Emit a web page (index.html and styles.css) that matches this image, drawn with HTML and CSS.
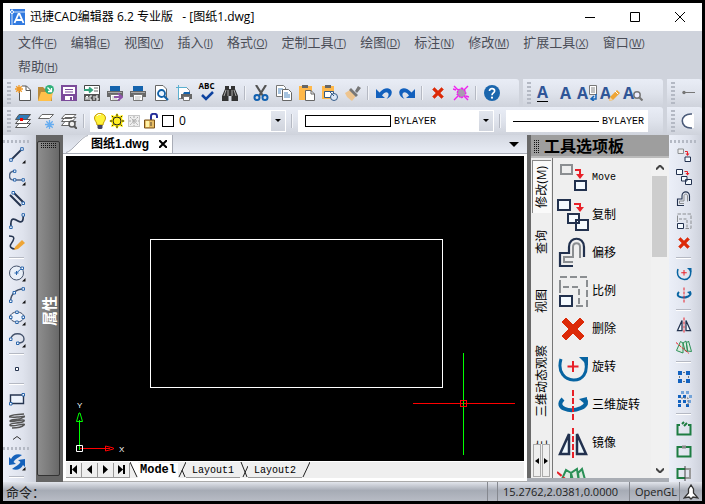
FILE: index.html
```html
<!DOCTYPE html>
<html lang="zh-CN">
<head>
<meta charset="utf-8">
<title>迅捷CAD编辑器</title>
<link rel="stylesheet" href="styles.css">
</head>
<body>
<svg class="sprite" aria-hidden="true">
  <symbol id="new" viewBox="0 0 16 16"><path d="M4.500 3.500V15.500H15.500V5L11.500 1H7" fill="#fff" stroke="#555" /><path d="M11 1v4.500h4.500" fill="none" stroke="#555"/><path d="M4 0v8M0 4h8M1.200 1.200l5.600 5.600M6.800 1.200L1.200 6.800" stroke="#f09a28" stroke-width="1.300"/></symbol>
  <symbol id="open" viewBox="0 0 16 16"><path d="M0 2h5l2 2h7v12H0z" fill="#b98a3c"/><path d="M3 7h12l-2 9H0z" fill="#ffc04a"/><circle cx="11.500" cy="4.500" r="4.500" fill="#2fb07a"/><path d="M9.500 2.500l4 4M13.500 3v3.500H10" stroke="#fff" fill="none" stroke-width="1.300"/></symbol>
  <symbol id="save" viewBox="0 0 16 16"><path d="M1 1h14v14H1z" fill="#fff" stroke="#7b4b9a" stroke-width="2"/><path d="M4 4.500h8M4 7h8" stroke="#7b4b9a"/><path d="M1 9h14v6H1z" fill="#7b4b9a"/><path d="M4 11h8v4H4z" fill="#fff"/><path d="M9 12h2v3H9z" fill="#7b4b9a"/></symbol>
  <symbol id="acis" viewBox="0 0 16 16"><path d="M.5 6V.5h15v15H.5V12" fill="#fff" stroke="#444"/><path d="M0 5h7M5 2.500L8 5 5 7.500" stroke="#33a37c" stroke-width="2" fill="none"/><path d="M10 3h4M10 6h4" stroke="#666"/><path d="M0 9h16v7H0z" fill="#555"/><path d="M2 15v-3l1-1 1 1v3M2 13h2M8 11H6v4h2M10 11v4M14 11h-2v2h2v2h-2" stroke="#fff" fill="none"/></symbol>
  <symbol id="print" viewBox="0 0 16 16"><path d="M3 1h10v5H3z" fill="#1463ad"/><path d="M0 6h16v6H0z" fill="#686868"/><path d="M1 7.500h14" stroke="#aaa"/><path d="M3.500 9.500h9v6h-9z" fill="#fff" stroke="#777"/><path d="M5 12h6M5 14h5" stroke="#bbb"/></symbol>
  <symbol id="print2" viewBox="0 0 16 16"><use href="#print"/><path d="M7 12h7M11 8.500l4 3.500-4 3.500" stroke="#8e55aa" stroke-width="2" fill="none"/></symbol>
  <symbol id="preview" viewBox="0 0 16 16"><path d="M2.500.5H10l3.500 3.500v11.500h-11z" fill="#fff" stroke="#666"/><circle cx="8.500" cy="8.500" r="3.500" fill="#eaf4ff" stroke="#1261a8" stroke-width="1.800"/><path d="M11 11l4 4" stroke="#1261a8" stroke-width="2.200"/></symbol>
  <symbol id="setup" viewBox="0 0 16 16"><path d="M2.500 2.500h8l3 3v8h-11z" fill="#fff" stroke="#888"/><path d="M0 2.500h11M2.500 0v15" stroke="#5bb0d0"/><path d="M7 9h7v-2H8z" fill="#1463ad"/><path d="M5 9h11v5H5z" fill="#666"/><path d="M7.500 11.500h6v4h-6z" fill="#fff" stroke="#777"/></symbol>
  <symbol id="check" viewBox="0 0 16 16"><path d="M3 10l4 4 7-7" stroke="#0e43a0" stroke-width="2.500" fill="none"/></symbol>
  <symbol id="find" viewBox="0 0 16 16"><path d="M3 1h4v3h2V1h4v3l3 7v5H9.500v-5h-3v5H0v-5l3-7z" fill="#333"/><path d="M4 5L2 11M6 5v6M10 5v6M12 5l2 6" stroke="#ddd" stroke-width=".7"/></symbol>
  <symbol id="cut" viewBox="0 0 16 16"><path d="M3 0l7 11M13 0L6 11" stroke="#555" stroke-width="2.200"/><circle cx="4" cy="12.500" r="2.500" fill="none" stroke="#1261b0" stroke-width="2"/><circle cx="12" cy="12.500" r="2.500" fill="none" stroke="#1261b0" stroke-width="2"/></symbol>
  <symbol id="copyc" viewBox="0 0 16 16"><path d="M.5.500h7l2 2v9h-9z" fill="#fff" stroke="#777"/><path d="M2 4h5M2 6h3M2 8h3" stroke="#4a86c0"/><path d="M6.500 4.500h6l3 3v8h-9z" fill="#fff" stroke="#666"/><path d="M8 8h4M8 10h6M8 12h6" stroke="#4a86c0"/></symbol>
  <symbol id="paste" viewBox="0 0 16 16"><path d="M0 1h13v14H0z" fill="#ffb84a"/><path d="M3 0h6v3H3z" fill="#666"/><path d="M6.500 5.500H12l3.500 3.500v6.500h-9z" fill="#fff" stroke="#666"/><path d="M12 5.500V9h3.500" stroke="#666" fill="none"/></symbol>
  <symbol id="pasteb" viewBox="0 0 16 16"><path d="M0 1h12v13H0z" fill="#ffb84a"/><path d="M3 0h6v3H3z" fill="#666"/><path d="M2.500 6.500h9v6h-9z" fill="#fff" stroke="#335a88"/><circle cx="12" cy="12" r="3.500" fill="#dbe6f5" stroke="#335a88"/><path d="M8 7l4 4" stroke="#335a88"/></symbol>
  <symbol id="brush" viewBox="0 0 16 16"><path d="M0 8l5-3 6 6-4 5-5-4z" fill="#eec590"/><path d="M6 3l7 7-2 2-7-7zM10 6l3-5 3 2-4 5z" fill="#777"/></symbol>
  <symbol id="undo" viewBox="0 0 16 16"><path d="M0 4v9h9L6 10.500C9 6 12 7 12.500 9c.3 2-.7 3.500-2 5 4-1.500 6-5 5-8C14 2 8 2 3.500 7.500z" fill="#1260bd"/></symbol>
  <symbol id="redo" viewBox="0 0 16 16"><g transform="matrix(-1 0 0 1 16 0)"><use href="#undo"/></g></symbol>
  <symbol id="del" viewBox="0 0 32 32"><path d="M9 5l7 7 7-7 4 4-7 7 7 7-4 4-7-7-7 7-4-4 7-7-7-7z" fill="#dc2a08" stroke="#dc2a08"/></symbol>
  <symbol id="purge" viewBox="0 0 16 16"><path d="M1 1l14 14M15 1L1 15M0 4l3 1M16 12l-3-1" stroke="#f01ef0" stroke-width="1.400"/><path d="M9 3l4 4-1 4-4 2-4-4 1-4z" fill="#a99ab0" stroke="#f01ef0" stroke-dasharray="2 1" stroke-width="1.400"/></symbol>
  <symbol id="help" viewBox="0 0 16 16"><circle cx="8" cy="8" r="8" fill="#1b66ad"/><path d="M5.500 6c0-3.500 5.300-3 5.100 0C10.500 8 8 8 8 10.300" stroke="#fff" stroke-width="1.700" fill="none"/><circle cx="8" cy="12.700" r="1.100" fill="#fff"/></symbol>
  <symbol id="dim" viewBox="0 0 16 16"><path d="M4 7.500h12" stroke="#777"/><circle cx="5" cy="7.500" r="1.700" fill="#777"/></symbol>
  <symbol id="page" viewBox="0 0 16 16"><path d="M8.500.500h7v9h-7z" fill="#fff" stroke="#777"/><path d="M10 3h4M10 5h4M10 7h4" stroke="#888"/><path d="M15 9v5h-5M13 11l-3 3 3 2" stroke="#1766b8" stroke-width="1.500" fill="none"/></symbol>
  <symbol id="pencil" viewBox="0 0 16 16"><path d="M5 16l1-4 7-7 3 3-7 7z" fill="#eea536"/><path d="M5 16l1-4 3 3z" fill="#eed4a5"/><path d="M11 6l3 3" stroke="#fff"/></symbol>
  <symbol id="loupe" viewBox="0 0 16 16"><circle cx="10" cy="10" r="3.200" fill="#eef" stroke="#777" stroke-width="1.500"/><path d="M12 12l3.500 3.500" stroke="#777" stroke-width="2.200"/></symbol>
  <symbol id="layers" viewBox="0 0 16 16"><path d="M4 10.500h11.500l-4 4H.5z" fill="#fff" stroke="#555"/><path d="M4 6.500h11.500l-4 4H.5z" fill="#fff" stroke="#555"/><path d="M4 1.500h11.500l-4 5H.5z" fill="#317cb8" stroke="#555"/><path d="M5 5h3v3H5z" fill="#e00"/></symbol>
  <symbol id="frz" viewBox="0 0 16 16"><path d="M4 1.500h11.500l-4 4H.5z" fill="#fff" stroke="#666"/><path d="M11.500 7v9M7 11.500h9M8.300 8.300l6.400 6.400M14.700 8.300l-6.400 6.400" stroke="#67adf0" stroke-width="1.300"/></symbol>
  <symbol id="lfind" viewBox="0 0 16 16"><path d="M4 8.500h11l-4 4H.5z" fill="#fff" stroke="#666"/><path d="M4 4.500h11l-4 4H.5zM4 1.500h11l-4 4H.5z" fill="#fff" stroke="#666"/><circle cx="11" cy="11" r="3" fill="#eee" stroke="#555" stroke-width="1.500"/><path d="M13 13l3 3" stroke="#555" stroke-width="2"/></symbol>
  <symbol id="arcd" viewBox="0 0 16 16"><path d="M15 1C1-1 1 17 15 15z" fill="#fff"/><path d="M13 1C0 0 0 16 13 15" fill="none" stroke="#4a5a78" stroke-width="1.500"/></symbol>
  <symbol id="bulb" viewBox="0 0 16 16"><path d="M5 12C5 9 2.500 8 2.500 5c0-6 11-6 11 0 0 3-2.500 4-2.500 7z" fill="#fff33a" stroke="#c59c00"/><path d="M5 3c1-2 3-2 4-1" stroke="#fff" fill="none"/><path d="M5.500 12h5v3l-1 1h-3l-1-1z" fill="#446"/></symbol>
  <symbol id="sun" viewBox="0 0 16 16"><path d="M8 0l2 3 4-1-1 4 3 2-3 2 1 4-4-1-2 3-2-3-4 1 1-4-3-2 3-2-1-4 4 1z" fill="#ffec00"/><path d="M8 1v14M1 8h14M3 3l10 10M13 3L3 13" stroke="#222" stroke-dasharray="2 1"/><circle cx="8" cy="8" r="4" fill="#ffee27" stroke="#222"/></symbol>
  <symbol id="snow" viewBox="0 0 16 16"><path d="M2.500 2.500h11v11h-11z" fill="#eee" stroke="#999" stroke-dasharray="1 1"/><path d="M8 3v10M3 8h10M4 4l8 8M12 4l-8 8" stroke="#aaa" stroke-dasharray="2 1"/></symbol>
  <symbol id="lock" viewBox="0 0 16 16"><path d="M8 7V3c0-3 6-3 6 0v2" fill="none" stroke="#252e98" stroke-width="2"/><path d="M1.500 7h10v8h-10z" fill="#e6bd65" stroke="#795018"/><path d="M3 8h3v6H3z" fill="#fff2a8"/><path d="M8 9v4" stroke="#543"/></symbol>
  <symbol id="fly" viewBox="0 0 16 16"><path d="M12 15.500h3.500V12z" fill="#111"/></symbol>
  <symbol id="line" viewBox="0 0 16 16"><path d="M2 13L13 2" stroke="#263550" stroke-width="1.800"/><path d="M.7 11.700h2.600v2.600H.7zM11.700.700h2.600v2.600h-2.600z" fill="#fff" stroke="#2b67ad"/></symbol>
  <symbol id="pline" viewBox="0 0 16 16"><path d="M5 2C-1 3-1 11 5 11h9" stroke="#526687" fill="none" stroke-width="1.500"/><path d="M4.500 1h2.400v2.400H4.500zM4.500 9.700h2.400v2.400H4.500zM13 9.700h2.400v2.400H13z" fill="#fff" stroke="#2b67ad"/></symbol>
  <symbol id="mline" viewBox="0 0 16 16"><path d="M1 4l11 11M4 1l11 11" stroke="#263550" stroke-width="2"/><path d="M3 .5h2.500V3H3zM13 11h2.500v2.500H13z" fill="#fff" stroke="#2b67ad"/></symbol>
  <symbol id="spline" viewBox="0 0 16 16"><path d="M2 14C1 3 6 6 9 8s6 1 5-6" fill="none" stroke="#263550" stroke-width="1.700"/><path d="M.7 13h2.500v2.500H.7zM13 .7h2.500v2.500H13z" fill="#fff" stroke="#2b67ad"/></symbol>
  <symbol id="sketch" viewBox="0 0 16 16"><path d="M0 1c8 0 4 5 2 8s1 5 4 5" fill="none" stroke="#263550" stroke-width="1.500"/><path d="M5 15l1-3 7-7 3 3-7 6z" fill="#eea536"/></symbol>
  <symbol id="circle" viewBox="0 0 16 16"><circle cx="7.500" cy="8" r="7" fill="#e8eff8" stroke="#44526b"/><path d="M7.500 8L13 3M5.500 8h4M7.500 6v4" stroke="#2b67ad"/><path d="M12 2h2.500v2.500H12z" fill="#fff" stroke="#2b67ad"/></symbol>
  <symbol id="arc" viewBox="0 0 16 16"><path d="M1.500 14C2 7 7 2 14 2" fill="none" stroke="#44526b" stroke-width="1.400"/><path d="M.5 13H3v2.500H.5zM4 4.500h2.500V7H4zM13 .7h2.500v2.500H13z" fill="#fff" stroke="#2b67ad"/></symbol>
  <symbol id="ell" viewBox="0 0 16 16"><ellipse cx="8" cy="8" rx="7" ry="5" fill="#edf3fc" stroke="#44526b"/><path d="M.5 7H3v2.500H.5zM13 7h2.500v2.500H13zM6.700 2h2.500v2.500H6.700zM6.700 12h2.500v2.500H6.700z" fill="#fff" stroke="#2b67ad"/></symbol>
  <symbol id="ellarc" viewBox="0 0 16 16"><path d="M2 8c0-7 13-7 13 0 0 3-3 4-6 4" fill="none" stroke="#44526b" stroke-width="1.400"/><path d="M.5 7H3v2.500H.5zM7.500 11H10v2.500H7.500z" fill="#fff" stroke="#2b67ad"/></symbol>
  <symbol id="point" viewBox="0 0 16 16"><path d="M6.500 6.500h3v3h-3z" fill="#fff" stroke="#263550"/></symbol>
  <symbol id="rect" viewBox="0 0 16 16"><path d="M1.500 4h13v8.500h-13z" fill="#edf3fc" stroke="#263550" stroke-width="1.400"/><path d="M.5 11.500H3V14H.5zM13 2.500h2.500V5H13z" fill="#fff" stroke="#2b67ad"/></symbol>
  <symbol id="helix" viewBox="0 0 16 16"><path d="M15 1C-3 2-3 5 8 4s8-1 5 1-12 1-12 3 16-3 14 0-14 1-14 4 17-3 14 0-9 3-12 3" fill="none" stroke="#555" stroke-width="1.500"/></symbol>
  <symbol id="refresh" viewBox="0 0 16 16"><path d="M0 3v8l7-1-2.500-2C6 5 9 4 13 1 8-1 4 1 2 5zM16 13V5L9 6l2.500 2C10 11 7 12 3 15c5 2 9 0 11-4z" fill="#1461bb"/></symbol>
  <symbol id="move" viewBox="0 0 32 32"><path d="M4 4h11v9H4z" fill="#eee" stroke="#8b8e91" stroke-width="2"/><path d="M18 9h5v6" fill="none" stroke="#e82028" stroke-width="2"/><path d="M19 13h8l-4 5z" fill="#e82028"/><path d="M18 20h11v9H18z" fill="#f4faff" stroke="#22314e" stroke-width="2"/></symbol>
  <symbol id="copy" viewBox="0 0 32 32"><path d="M1 1h12v10H1z" fill="#f4faff" stroke="#22314e" stroke-width="2"/><path d="M17 5h6v5" fill="none" stroke="#e82028" stroke-width="2"/><path d="M19 8h8l-4 5z" fill="#e82028"/><path d="M11 15h11v9H11zM19 21h12v10H19z" fill="#f4faff" stroke="#22314e" stroke-width="2"/></symbol>
  <symbol id="offset" viewBox="0 0 32 32"><path d="M16 29H3V16h9V10c0-11 15-11 15 0v10" fill="none" stroke="#22314e" stroke-width="2.200"/><path d="M16 25H7v-5h9V10c0-5 7-5 7 0v11" fill="none" stroke="#8b8e91" stroke-width="2"/></symbol>
  <symbol id="scale" viewBox="0 0 32 32"><path d="M3 12V2h27v29H19" fill="none" stroke="#8b8e91" stroke-width="2" stroke-dasharray="7 3"/><path d="M3 18v-6h19v19" fill="none" stroke="#8b8e91" stroke-width="2" stroke-dasharray="6 3"/><path d="M3 21h12v10H3z" fill="#f4faff" stroke="#22314e" stroke-width="2"/></symbol>
  <symbol id="rotate" viewBox="0 0 32 32"><path d="M4 8C-4 35 37 37 28 8" fill="none" stroke="#0764a2" stroke-width="3"/><path d="M22 6h9v9z" fill="#0764a2"/><path d="M16 10v11M10.500 15.500h11" stroke="#e82028" stroke-width="2"/></symbol>
  <symbol id="rot3" viewBox="0 0 32 32"><path d="M6 10c-9 9 7 14 18 9 6-3 6-6 4-9" fill="none" stroke="#0764a2" stroke-width="4"/><path d="M22 10l8-2-1 8z" fill="#0764a2"/><path d="M16 1v31" stroke="#e82028" stroke-width="2" stroke-dasharray="6 2"/></symbol>
  <symbol id="mirror" viewBox="0 0 32 32"><path d="M3 27L12 7v20zM29 27L20 7v20z" fill="#eef7fc" stroke="#22314e" stroke-width="2.500"/><path d="M16 1v31" stroke="#e82028" stroke-width="2" stroke-dasharray="6 2"/></symbol>
  <symbol id="mirror3" viewBox="0 0 32 32"><path d="M1 23L9 5l5 3v20zM18 23l-4-15 6-4 3 21zM23 24L21 8l4-4 6 21z" fill="#dce9df" stroke="#2b9057" stroke-width="2"/><path d="M0 7l26 22" stroke="#e82028" stroke-width="2" stroke-dasharray="6 2"/></symbol>
  <symbol id="array" viewBox="0 0 16 16"><path d="M4 3.500h8M4 12.500h8M3.500 4v8M12.500 4v8" stroke="#777" stroke-dasharray="2 1"/><path d="M2 2h4v4H2zM10 2h4v4h-4zM2 10h4v4H2zM10 10h4v4h-4z" fill="#1262c0"/></symbol>
  <symbol id="array3" viewBox="0 0 16 16"><path d="M2 4h3v3H2zM7 4h3v3H7zM2 9h3v3H2zM7 9h3v3H7zM2 13h3v3H2zM10 13h3v3h-3z" fill="#1262c0"/><path d="M5 0h3v3H5zM10 0h3v3h-3zM13 4h3v3h-3zM12 9h3v3h-3z" fill="#73a3d8"/><path d="M5 7h7v7" fill="none" stroke="#777" stroke-dasharray="2 1"/></symbol>
  <symbol id="brk" viewBox="0 0 16 16"><path d="M4 4H1.500v9.500h13V4H12M6 3l2-2M8 5l3-3" fill="none" stroke="#1d7d42" stroke-width="2"/></symbol>
  <symbol id="join" viewBox="0 0 16 16"><path d="M6 4H1.500v9.500h13V4H10" fill="none" stroke="#1d7d42" stroke-width="2"/><path d="M6 4h4" stroke="#888" stroke-width="3"/></symbol>
  <symbol id="trim" viewBox="0 0 16 16"><path d="M9 4H1.500v9H9" fill="none" stroke="#1d7d42" stroke-width="2"/><path d="M9 4h5v9H9" fill="none" stroke="#999" stroke-width="2"/><path d="M9 1v15" stroke="#444"/></symbol>
</svg>

<div class="window">
  <header class="titlebar">
    <svg class="logo" viewBox="0 0 16 16"><path d="M1 0h15v16H1z" fill="#317ae0"/><path d="M3 0v16M0 3h16" stroke="#fff" stroke-width=".8"/><circle cx="3" cy="3" r="1.500" fill="#317ae0" stroke="#fff"/><path d="M5.500 14L9.500 5h1l4 9M7 11h6" stroke="#fff" stroke-width="1.800" fill="none"/></svg>
    <h1>迅捷CAD编辑器 6.2 专业版 &nbsp; - [图纸1.dwg]</h1>
    <div class="winbtns">
      <button aria-label="最小化"><svg viewBox="0 0 10 10"><path d="M0 5.500h10"/></svg></button>
      <button aria-label="最大化"><svg viewBox="0 0 10 10"><path d="M.5.500h9v9h-9z"/></svg></button>
      <button aria-label="关闭"><svg viewBox="0 0 10 10"><path d="M0 0l10 10M10 0L0 10"/></svg></button>
    </div>
  </header>

  <nav class="menu">
    <a href="#">文件<small>(<u>F</u>)</small></a>
    <a href="#">编辑<small>(<u>E</u>)</small></a>
    <a href="#">视图<small>(<u>V</u>)</small></a>
    <a href="#">插入<small>(<u>I</u>)</small></a>
    <a href="#">格式<small>(<u>O</u>)</small></a>
    <a href="#">定制工具<small>(<u>T</u>)</small></a>
    <a href="#">绘图<small>(<u>D</u>)</small></a>
    <a href="#">标注<small>(<u>N</u>)</small></a>
    <a href="#">修改<small>(<u>M</u>)</small></a>
    <a href="#">扩展工具<small>(<u>X</u>)</small></a>
    <a href="#">窗口<small>(<u>W</u>)</small></a>
    <a href="#">帮助<small>(<u>H</u>)</small></a>
  </nav>

  <div class="row">
    <div class="bar grow">
      <i class="grip"></i>
      <button aria-label="新建"><svg><use href="#new"/></svg></button>
      <button aria-label="打开"><svg><use href="#open"/></svg></button>
      <button aria-label="保存"><svg><use href="#save"/></svg></button>
      <button aria-label="ACIS"><svg><use href="#acis"/></svg></button>
      <button aria-label="批量打印"><svg><use href="#print2"/></svg></button>
      <button aria-label="打印"><svg><use href="#print"/></svg></button>
      <button aria-label="预览"><svg><use href="#preview"/></svg></button>
      <button aria-label="页面设置"><svg><use href="#setup"/></svg></button>
      <button class="lettered" aria-label="拼写"><b class="abc">ABC</b><svg><use href="#check"/></svg></button>
      <button aria-label="查找"><svg><use href="#find"/></svg></button>
      <i class="sep"></i>
      <button aria-label="剪切"><svg><use href="#cut"/></svg></button>
      <button aria-label="复制到剪贴板"><svg><use href="#copyc"/></svg></button>
      <button aria-label="粘贴"><svg><use href="#paste"/></svg></button>
      <button aria-label="粘贴为块"><svg><use href="#pasteb"/></svg></button>
      <button aria-label="特性匹配"><svg><use href="#brush"/></svg></button>
      <i class="sep"></i>
      <button aria-label="撤销"><svg><use href="#undo"/></svg></button>
      <button aria-label="重做"><svg><use href="#redo"/></svg></button>
      <i class="sep"></i>
      <button aria-label="删除"><svg><use href="#del"/></svg></button>
      <button aria-label="清理"><svg><use href="#purge"/></svg></button>
      <i class="sep"></i>
      <button aria-label="帮助"><svg><use href="#help"/></svg></button>
    </div>
    <div class="bar textbar">
      <i class="grip"></i>
      <button class="lettered" aria-label="多行文字"><b class="big under">A</b></button>
      <button class="lettered" aria-label="单行文字"><b class="big">A</b></button>
      <button class="lettered" aria-label="文字样式"><b class="big start">A</b><svg><use href="#page"/></svg></button>
      <button class="lettered" aria-label="编辑文字"><b class="big start">A</b><svg><use href="#pencil"/></svg></button>
      <button class="lettered" aria-label="查找文字"><b class="big start">A</b><svg><use href="#loupe"/></svg></button>
    </div>
    <div class="bar last">
      <i class="grip"></i>
      <button aria-label="标注"><svg><use href="#dim"/></svg></button>
    </div>
  </div>

  <div class="row">
    <div class="bar grow">
      <i class="grip"></i>
      <button aria-label="图层"><svg><use href="#layers"/></svg></button>
      <button aria-label="冻结图层"><svg><use href="#frz"/></svg></button>
      <button aria-label="查找图层"><svg><use href="#lfind"/></svg></button>
      <i class="sep"></i>
      <div class="combo">
        <div class="state">
          <svg><use href="#bulb"/></svg><svg><use href="#sun"/></svg><svg><use href="#snow"/></svg><svg><use href="#lock"/></svg><i class="swatch"></i>
        </div>
        <select class="layer" aria-label="图层"><option>0</option></select>
        <i class="drop"></i>
      </div>
      <i class="sep"></i>
      <div class="combo">
        <div class="state"><i class="colorbox"></i></div>
        <select class="color" aria-label="颜色"><option>BYLAYER</option></select>
        <i class="drop"></i>
      </div>
      <i class="sep"></i>
      <div class="combo linetype">
        <div class="state"><i class="sample"></i></div>
        <select class="ltype" aria-label="线型"><option>BYLAYER</option></select>
      </div>
    </div>
    <div class="bar last">
      <i class="grip"></i>
      <button aria-label="圆弧"><svg><use href="#arcd"/></svg></button>
    </div>
  </div>

  <main class="main">
    <div class="vbar left">
      <i class="hgrip"></i>
      <button aria-label="直线"><svg><use href="#line"/></svg><svg class="fly"><use href="#fly"/></svg></button>
      <button aria-label="多段线"><svg><use href="#pline"/></svg><svg class="fly"><use href="#fly"/></svg></button>
      <button aria-label="多线"><svg><use href="#mline"/></svg></button>
      <button aria-label="样条曲线"><svg><use href="#spline"/></svg></button>
      <button aria-label="徒手画"><svg><use href="#sketch"/></svg></button>
      <i class="hsep"></i>
      <button aria-label="圆"><svg><use href="#circle"/></svg><svg class="fly"><use href="#fly"/></svg></button>
      <button aria-label="圆弧"><svg><use href="#arc"/></svg><svg class="fly"><use href="#fly"/></svg></button>
      <button aria-label="椭圆"><svg><use href="#ell"/></svg><svg class="fly"><use href="#fly"/></svg></button>
      <button aria-label="椭圆弧"><svg><use href="#ellarc"/></svg><svg class="fly"><use href="#fly"/></svg></button>
      <i class="hsep"></i>
      <button aria-label="点"><svg><use href="#point"/></svg></button>
      <i class="hsep"></i>
      <button aria-label="矩形"><svg><use href="#rect"/></svg></button>
      <button aria-label="螺旋"><svg><use href="#helix"/></svg></button>
      <svg class="more" viewBox="0 0 8 4"><path d="M0 3.500L4 .5l4 3"/></svg>
      <i class="hgrip"></i>
      <button aria-label="重画"><svg><use href="#refresh"/></svg><svg class="fly"><use href="#fly"/></svg></button>
      <i class="hsep"></i>
    </div>

    <aside class="props"><div class="propsbar"><i class="dots"></i><span>属性</span></div></aside>

    <section class="doc">
      <div class="doctabs">
        <svg class="slant" viewBox="0 0 22 18"><path d="M0 18C8 16 14 1 22 0v18z" fill="#fff"/><path d="M0 17.500C6 17 16 1 22 .5" fill="none" stroke="#a9adb7"/></svg>
        <div class="doctab">图纸1.dwg<button aria-label="关闭图纸"><svg viewBox="0 0 8 8"><path d="M0 0l8 8M8 0L0 8"/></svg></button></div>
        <i class="caret"></i>
      </div>
      <div class="frame">
        <div class="canvas">
          <svg class="drawing" shape-rendering="crispEdges">
            <rect x="84.500" y="83.500" width="292" height="148" fill="none" stroke="#fff"/>
            <path d="M347 247.500h102" stroke="#f00"/><path d="M397.500 197v102" stroke="#0f0"/>
            <rect x="394.500" y="244.500" width="6" height="6" fill="none" stroke="#f00"/>
          </svg>
          <svg class="ucs" viewBox="0 0 60 64">
            <path d="M13.500 22v30" stroke="#0f0"/><path d="M10.500 23.500L13 15h1l2.500 8.500z" fill="none" stroke="#0f0"/>
            <path d="M14 50.500h30" stroke="#f00"/><path d="M39.500 48v5l8-2v-1z" fill="none" stroke="#f00"/>
            <path d="M10.500 47.500h6v6h-6z" fill="none" stroke="#fff"/>
            <text x="11" y="10">Y</text><text x="53" y="54">X</text>
          </svg>
        </div>
        <div class="sheets">
          <button aria-label="首页"><svg viewBox="0 0 9 9"><path d="M1 0h2v9H1zM8 0v9L3 4.500z"/></svg></button>
          <button aria-label="上一页"><svg viewBox="0 0 9 9"><path d="M7 0v9L2 4.500z"/></svg></button>
          <button aria-label="下一页"><svg viewBox="0 0 9 9"><path d="M2 0v9l5-4.500z"/></svg></button>
          <button aria-label="末页"><svg viewBox="0 0 9 9"><path d="M6 0h2v9H6zM1 0v9l5-4.500z"/></svg></button>
          <svg class="edge" viewBox="0 0 8 16"><path d="M0 0l7 15h1V0z" fill="#fff" stroke="none"/><path d="M0 0l7 15"/></svg>
          <a class="on" href="#">Model</a>
          <svg class="edge" viewBox="0 0 8 16"><path d="M8 0L1 15M4 8l3 7"/></svg>
          <a href="#">Layout1</a>
          <svg class="edge" viewBox="0 0 8 16"><path d="M8 4L3 15M1 0l6 15"/></svg>
          <a href="#">Layout2</a>
          <svg class="edge" viewBox="0 0 8 16"><path d="M8 0L1 15"/></svg>
        </div>
      </div>
    </section>

    <aside class="palette">
      <h2><i class="dots tall"></i>工具选项板</h2>
      <div class="palbody">
        <div class="paltabs">
          <div class="tablist">
            <button class="on"><span>修改(M)</span></button>
            <button><span>查询</span></button>
            <button><span>视图</span></button>
            <button class="long"><span>三维动态观察</span></button>
            <button class="cutoff"><span>标注</span></button>
          </div>
          <div class="arrows"><button aria-label="向前"><svg viewBox="0 0 4 6"><path d="M4 0v6L0 3z"/></svg></button><button aria-label="向后"><svg viewBox="0 0 4 6"><path d="M0 0v6l4-3z"/></svg></button></div>
        </div>
        <div class="tools">
          <button><svg><use href="#move"/></svg><span class="mono">Move</span></button>
          <button><svg><use href="#copy"/></svg>复制</button>
          <button><svg><use href="#offset"/></svg>偏移</button>
          <button><svg><use href="#scale"/></svg>比例</button>
          <button><svg><use href="#del"/></svg>删除</button>
          <button><svg><use href="#rotate"/></svg>旋转</button>
          <button><svg><use href="#rot3"/></svg>三维旋转</button>
          <button><svg><use href="#mirror"/></svg>镜像</button>
          <button aria-label="三维镜像"><svg><use href="#mirror3"/></svg></button>
        </div>
        <div class="scroll">
          <svg viewBox="0 0 8 5"><path d="M0 4.500l4-4 4 4"/></svg>
          <i class="thumb"></i>
          <svg viewBox="0 0 8 5"><path d="M0 .5l4 4 4-4"/></svg>
        </div>
      </div>
    </aside>

    <div class="vbar">
      <i class="hgrip"></i>
      <button aria-label="移动"><svg><use href="#move"/></svg></button>
      <button aria-label="复制"><svg><use href="#copy"/></svg></button>
      <button aria-label="偏移"><svg><use href="#offset"/></svg></button>
      <button aria-label="比例"><svg><use href="#scale"/></svg></button>
      <button aria-label="删除"><svg><use href="#del"/></svg></button>
      <i class="hsep"></i>
      <button aria-label="旋转"><svg><use href="#rotate"/></svg></button>
      <button aria-label="三维旋转"><svg><use href="#rot3"/></svg></button>
      <i class="hsep"></i>
      <button aria-label="镜像"><svg><use href="#mirror"/></svg></button>
      <button aria-label="三维镜像"><svg><use href="#mirror3"/></svg></button>
      <i class="hsep"></i>
      <button aria-label="阵列"><svg><use href="#array"/></svg></button>
      <button aria-label="三维阵列"><svg><use href="#array3"/></svg></button>
      <i class="hsep"></i>
      <button aria-label="打断"><svg><use href="#brk"/></svg></button>
      <button aria-label="合并"><svg><use href="#join"/></svg></button>
      <button aria-label="修剪"><svg><use href="#trim"/></svg></button>
    </div>
  </main>

  <footer class="status">
    <span class="cmd">命令：</span>
    <i class="cell narrow"></i>
    <span class="cell coords">15.2762,2.0381,0.0000</span>
    <span class="cell gl">OpenGL</span>
    <span class="cell end"><svg viewBox="0 0 16 16"><path d="M8 1L5.500 5v4L1 14l5-1 2 2 2-2 5 1-4.500-5V5z" fill="#fff" stroke="#333" stroke-width="1.300"/></svg></span>
  </footer>
</div>
</body>
</html>
```
FILE: styles.css
```css
* { box-sizing: border-box; }
body {
  margin: 0;
  background: #000;
  color: #000;
  font: 12px/16px "Open Sans", "Noto Sans CJK SC", sans-serif;
}
button, select { font: inherit; color: inherit; border: 0; padding: 0; margin: 0; background: none; border-radius: 0; }
a { color: inherit; text-decoration: none; }
i { display: block; flex: none; }
svg { display: block; flex: none; }
.sprite { position: absolute; width: 0; height: 0; }

.window {
  height: calc(100vh - 6px);
  margin: 3px;
  display: flex;
  flex-direction: column;
  background: #cfd3dc;
  overflow: hidden;
}

.titlebar { flex: none; height: 28px; display: flex; align-items: center; gap: 5px; padding-left: 6px; background: #fff; }
.logo { width: 16px; height: 16px; }
.titlebar h1 { flex: 1; margin: 0; font-size: 12px; font-weight: 400; white-space: nowrap; }
.winbtns { display: flex; }
.winbtns button { width: 45px; height: 26px; display: grid; place-items: center; }
.winbtns svg { width: 10px; height: 10px; fill: none; stroke: #000; overflow: visible; }

.menu {
  flex: none;
  display: flex;
  flex-wrap: wrap;
  column-gap: 14px;
  padding: 0 15px;
  background: #cfd3dc;
  color: #4a4d57;
  font-size: 13px;
  line-height: 22px;
}
.menu a { height: 24px; }
.menu small { font-family: "Liberation Sans", sans-serif; font-size: 10px; }

.row { flex: none; height: 28px; display: flex; gap: 4px; }
.bar {
  display: flex;
  align-items: center;
  padding: 0 4px;
  min-width: 0;
  background: linear-gradient(#e9edf6, #dfe3ec 50%, #cfd3dc);
  border-radius: 0 3px 3px 0;
}
.grow { flex: 1; overflow: hidden; }
.textbar { width: 140px; }
.last { width: 35px; overflow: hidden; }
.grip {
  width: 4px;
  height: 22px;
  background: repeating-linear-gradient(#b4b9c4 0 2px, transparent 2px 4px);
}
.bar button { width: 23px; height: 24px; flex: none; display: grid; place-items: center; }
.bar button svg { width: 16px; height: 16px; }
.sep { width: 2px; height: 14px; margin: 0 3px; background: #b5b9c3; border-right: 1px solid #f2f4f8; }
.lettered > * { grid-area: 1 / 1; }
.abc { align-self: start; font-size: 8px; line-height: 9px; }
.big { color: #2f5597; font-size: 16px; line-height: 18px; }
.under { border-bottom: 1px solid #000; line-height: 17px; }
.start { justify-self: start; }

.combo { flex: none; position: relative; width: 196px; height: 22px; margin: 0 2px; display: flex; background: #fff; }
.combo select { flex: 1; appearance: none; background: transparent; outline: 0; }
.combo .layer { padding-left: 89px; }
.combo .color, .combo .ltype { padding-left: 96px; font: 10px "Liberation Mono", monospace; }
.linetype { width: 142px; }
.state { position: absolute; left: 2px; top: 3px; display: flex; gap: 1px; pointer-events: none; }
.state svg { width: 16px; height: 16px; }
.swatch { width: 12px; height: 12px; margin: 2px; border: 1px solid #000; }
.colorbox { width: 86px; height: 12px; margin: 2px 5px; border: 1px solid #000; }
.sample { width: 86px; height: 1px; margin: 8px 5px; background: #000; }
.drop { position: relative; width: 15px; background: linear-gradient(#e2e6ee, #d0d4dd); border: solid #fff; border-width: 1px 1px 1px 0; pointer-events: none; }
.drop::after { content: ""; position: absolute; left: 4px; top: 8px; border: 3px solid transparent; border-top: 3px solid #000; }

.main { flex: 1; min-height: 0; display: flex; }
.vbar {
  flex: none;
  width: 33px;
  display: flex;
  flex-direction: column;
  align-items: center;
  padding: 5px 4px 0 0;
  overflow: hidden;
  background: linear-gradient(90deg, #ebeff8, #dfe3ed 60%, #cdd1db);
}
.vbar button { position: relative; flex: none; width: 22px; height: 22px; display: grid; place-items: center; }
.vbar button svg { width: 16px; height: 16px; }
.vbar button .fly { position: absolute; right: 2px; bottom: 2px; }
.left { padding-right: 6px; }
.hgrip { width: 27px; height: 3px; margin-bottom: 1px; background: repeating-linear-gradient(90deg, #b4b9c4 0 2px, transparent 2px 4px); }
.hsep { width: 15px; height: 2px; margin: 3px; background: #b5b9c3; border-bottom: 1px solid #fff; }
.more { width: 8px; height: 4px; margin: 4px 0 7px; fill: none; stroke: #333; }

.props { flex: none; width: 27px; padding: 6px 3px 6px 1px; background: #656565; }
.propsbar {
  height: 100%;
  display: flex;
  flex-direction: column;
  align-items: center;
  gap: 148px;
  border: 1px solid #333;
  border-radius: 2px;
  background: linear-gradient(90deg, #8d8d8d, #7c7c7c 50%, #686868);
  color: #fff;
  font: bold 15px/18px "Noto Sans CJK SC", sans-serif;
}
.propsbar span, .paltabs span { writing-mode: vertical-rl; text-orientation: sideways; transform: rotate(180deg); }
.dots { width: 16px; height: 5px; margin-top: 1px; background: conic-gradient(at 1px 1px, transparent 75%, #111 0) 0 0 / 2px 2px; }

.doc { flex: 1; min-width: 0; display: flex; flex-direction: column; }
.doctabs {
  flex: none;
  height: 19px;
  display: flex;
  align-items: flex-end;
  padding: 0 8px 0 3px;
  background: linear-gradient(#d4d8e1, #e8ecf5);
  border-bottom: 1px solid #a9adb7;
}
.slant { width: 22px; height: 18px; }
.doctab {
  height: 18px;
  display: flex;
  align-items: center;
  gap: 10px;
  padding: 0 5px 0 3px;
  background: #fff;
  border-right: 1px solid #a9adb7;
  font-family: "Liberation Sans", "Noto Sans CJK SC", sans-serif;
  font-weight: 700;
}
.doctab svg { width: 8px; height: 8px; stroke: #000; stroke-width: 2; }
.caret { margin: 0 0 6px auto; border: 5px solid transparent; border-top-color: #000; border-bottom: 0; }
.frame { flex: 1; min-height: 0; display: flex; flex-direction: column; padding: 2px 3px 3px; background: #fff; border-bottom: 1px solid #aaa; }
.canvas { position: relative; flex: 1; min-height: 0; background: #000; }
.drawing { width: 100%; height: 100%; position: absolute; }
.ucs { position: absolute; left: 0; bottom: -1px; width: 60px; height: 64px; }
.ucs text { fill: #fff; font: 8px "Liberation Sans", sans-serif; }
.sheets { flex: none; height: 17px; display: flex; align-items: center; background: #efefef; border-top: 1px solid #fff; font: 10px "Liberation Mono", monospace; }
.sheets button { width: 16px; height: 15px; display: grid; place-items: center; border: 1px solid #999; border-width: 0 1px 1px 0; }
.sheets button svg { width: 9px; height: 9px; }
.sheets a { height: 15px; line-height: 15px; padding: 0 6px; border-bottom: 1px solid #999; }
.sheets a.on { padding: 0 2px; background: #fff; border-color: #fff; font-size: 12px; font-weight: 700; }
.edge { width: 8px; height: 16px; fill: none; stroke: #222; }

.palette { flex: none; width: 142px; display: flex; flex-direction: column; padding-left: 4px; background: #696969; border-bottom: 4px solid #a9adb4; }
.palette h2 {
  flex: none;
  height: 21px;
  display: flex;
  align-items: center;
  gap: 5px;
  margin: 0;
  padding-left: 3px;
  background: #9e9e9e;
  font-size: 16px;
  line-height: 20px;
}
.tall { width: 5px; height: 13px; }
.palbody { flex: 1; min-height: 0; display: flex; background: #efefef; border-top: 2px solid #bbb; }
.paltabs { flex: none; width: 22px; display: flex; flex-direction: column; border-right: 1px solid #777; }
.tablist { flex: 1; min-height: 0; overflow: hidden; display: flex; flex-direction: column; padding: 2px 1px 0; }
.paltabs .tablist button { flex: none; height: 59px; display: grid; place-items: center; line-height: 18px; }
.paltabs .tablist .on { height: 53px; background: #fafafa; border: 1px solid #888; border-width: 1px 0 0 1px; }
.paltabs .tablist .long { height: 100px; }
.paltabs .tablist .cutoff { height: 42px; }
.arrows { flex: none; height: 34px; display: flex; gap: 1px; padding: 0 2px 1px; }
.arrows button { flex: 1; display: grid; place-items: center; border: 1px solid #aaa; }
.arrows svg { width: 4px; height: 6px; }
.tools { flex: 1; min-width: 0; overflow: hidden; }
.tools button { width: 100%; height: 38px; display: flex; align-items: center; gap: 3px; padding-left: 4px; white-space: nowrap; }
.tools svg { width: 32px; height: 32px; }
.mono { font: 10px "Liberation Mono", monospace; }
.scroll { flex: none; width: 18px; display: flex; flex-direction: column; align-items: center; padding: 7px 2px 5px 1px; background: #f1f1f1; }
.scroll svg { width: 8px; height: 5px; fill: none; stroke: #444; stroke-width: 2; }
.thumb { width: 15px; height: 81px; margin: 6px 0 auto; background: #cdcdcd; }

.status {
  flex: none;
  height: 19px;
  display: flex;
  align-items: center;
  background: linear-gradient(#e2e5ec, #a6abb5 45%, #b8bcc5);
  color: #222;
  font-size: 11px;
}
.cmd { flex: 1; padding-left: 3px; font-size: 13px; }
.cell { height: 100%; line-height: 19px; border-left: 1px solid #85888f; padding-left: 5px; }
.narrow { width: 10px; }
.coords { width: 132px; }
.gl { width: 50px; }
.end { width: 23px; padding: 2px 2px 0 3px; }
.end svg { width: 16px; height: 16px; }
```
